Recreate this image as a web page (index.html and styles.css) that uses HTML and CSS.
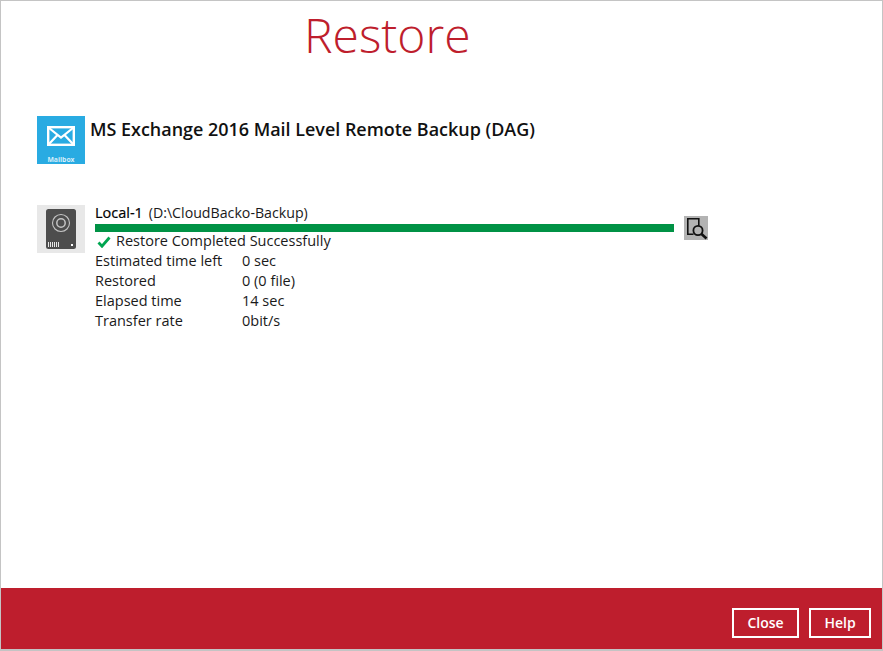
FILE: index.html
```html
<!DOCTYPE html>
<html lang="en">
<head>
<meta charset="utf-8">
<title>Restore</title>
<link rel="stylesheet" href="styles.css">
</head>
<body>
<div class="window">
  <main class="content">
    <h1 class="title">Restore</h1>
    <section class="backup-set">
      <div class="mailbox-icon">
        <svg width="28" height="20" viewBox="0 0 28 20" class="mail-svg">
          <rect x="1.200" y="1.200" width="25.600" height="17.600" fill="none" stroke="#fff" stroke-width="2.400"/>
          <path d="M2 2l12 9.500L26 2M2 18l8.500-9M26 18l-8.500-9" fill="none" stroke="#fff" stroke-width="2.200"/>
        </svg>
        <span class="mailbox-label">Mailbox</span>
      </div>
      <div class="set-name">MS Exchange 2016 Mail Level Remote Backup (DAG)</div>
    </section>
    <section class="dest">
      <div class="drive-icon">
        <svg width="30" height="40" viewBox="0 0 30 40">
          <rect width="30" height="40" rx="2.500" fill="#4d4d4d"/>
          <circle cx="15" cy="14" r="8.500" fill="none" stroke="#c4c4c4" stroke-width="1.100"/>
          <circle cx="15" cy="14" r="4.200" fill="none" stroke="#c4c4c4" stroke-width="1.500"/>
          <path d="M2.500 33v5M4.500 33v5M6.500 33v5M8.500 33v5M10.500 33v5M12.500 33v5" stroke="#e6e6e6" stroke-width="1"/>
          <rect x="25" y="35" width="2" height="2" fill="#fff"/>
        </svg>
      </div>
      <div class="dest-body">
        <div class="dest-name"><span class="dest-local">Local-1</span> <span class="dest-path">(D:\CloudBacko-Backup)</span></div>
        <div class="progress"></div>
        <div class="status">
          <svg width="14" height="12" viewBox="0 0 14 12" class="check"><path d="M1.500 6.500L5 10.200 12.500 1.500" fill="none" stroke="#00a651" stroke-width="2.800"/></svg>
          <span>Restore Completed Successfully</span>
        </div>
        <dl class="stats">
          <dt>Estimated time left</dt><dd>0 sec</dd>
          <dt>Restored</dt><dd>0 (0 file)</dd>
          <dt>Elapsed time</dt><dd>14 sec</dd>
          <dt>Transfer rate</dt><dd>0bit/s</dd>
        </dl>
      </div>
      <div class="log-btn">
        <svg width="24" height="24" viewBox="0 0 24 24">
          <path d="M9.500 18.200H3.800V2.800h11v7" fill="none" stroke="#111" stroke-width="1.600"/>
          <circle cx="14" cy="14.500" r="4.600" fill="none" stroke="#111" stroke-width="1.800"/>
          <path d="M17.500 18l5 4.500" stroke="#111" stroke-width="2.600"/>
        </svg>
      </div>
    </section>
  </main>
  <footer class="footer">
    <button class="btn btn-close">Close</button>
    <button class="btn btn-help">Help</button>
  </footer>
</div>
</body>
</html>
```
FILE: styles.css
```css
html, body { margin: 0; padding: 0; height: 100%; }
body { font-family: "Open Sans", sans-serif; background: #fff; color: #1a1a1a; overflow: hidden; }
svg { display: block; }
.window { box-sizing: border-box; width: 883px; height: 651px; display: flex; flex-direction: column; border: 1px solid #c4c4c4; border-bottom-width: 2px; }
.content { flex: 1; padding: 0 36px; min-height: 0; }
.title { margin: 0; height: 115px; box-sizing: border-box; padding: 2px 0 0 267px; font-weight: 300; font-size: 48px; line-height: 64px; color: #be1e2d; }
.backup-set { display: flex; gap: 5px; }
.mailbox-icon { width: 48px; height: 48px; background: #29abe2; display: flex; flex-direction: column; align-items: center; }
.mail-svg { margin-top: 10px; }
.mailbox-label { font-size: 6.800px; line-height: 9px; font-weight: 700; color: #d5eefa; margin-top: 9px; }
.set-name { font-size: 17.950px; font-weight: 600; line-height: 24px; color: #111; white-space: nowrap; margin-top: 1px; }
.dest { display: flex; margin-top: 41px; align-items: flex-start; }
.drive-icon { width: 48px; height: 48px; background: #e8e8e8; display: flex; justify-content: center; padding-top: 4px; box-sizing: border-box; }
.dest-body { width: 579px; margin-left: 10px; font-size: 14.500px; line-height: 20px; }
.dest-name { height: 19px; line-height: 15px; white-space: nowrap; }
.dest-local { color: #000; -webkit-text-stroke: 0.2px #000; margin-right: 1px; }
.dest-path { font-size: 14.200px; margin-left: 1px; }
.progress { height: 8px; background: #009245; }
.status { display: flex; align-items: center; gap: 5px; height: 20px; margin-top: -1px; padding-left: 2px; }
.check { margin-top: 2px; }
.stats { margin: 0; display: grid; grid-template-columns: 147px 1fr; }
.stats dt, .stats dd { margin: 0; height: 20px; }
.log-btn { width: 24px; height: 24px; background: #b3b3b3; margin: 11px 0 0 10px; }
.footer { height: 61px; flex: none; background: #be1e2d; display: flex; justify-content: flex-end; align-items: flex-start; gap: 10px; padding: 20px 11px 0 0; box-sizing: border-box; }
.btn { box-sizing: border-box; height: 30px; background: transparent; border: 2px solid #fff; color: #fff; font-family: "Open Sans", sans-serif; font-weight: 600; font-size: 14px; padding: 0 0 2px; }
.btn-close { width: 67px; }
.btn-help { width: 62px; }
```
